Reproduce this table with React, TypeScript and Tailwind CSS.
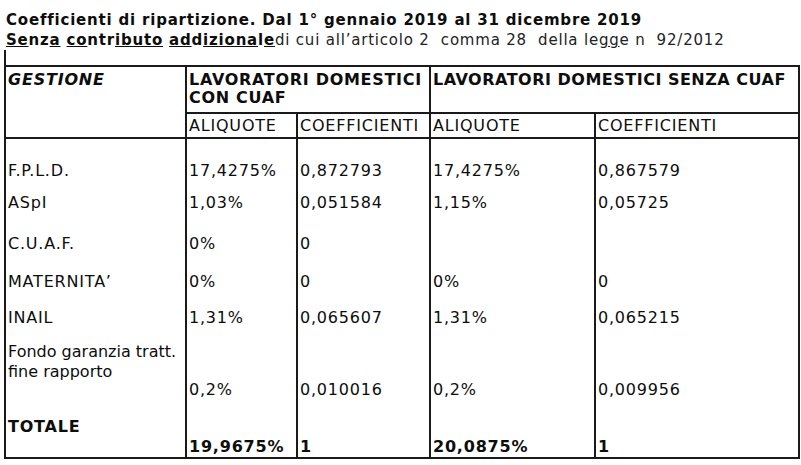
const rows = [
  { label: 'F.P.L.D.', a1: '17,4275%', c1: '0,872793', a2: '17,4275%', c2: '0,867579', h: 'h-[43px]' },
  { label: 'ASpI', a1: '1,03%', c1: '0,051584', a2: '1,15%', c2: '0,05725', h: 'h-[32px]' },
  { label: 'C.U.A.F.', a1: '0%', c1: '0', a2: '', c2: '', h: 'h-[41px]' },
  { label: 'MATERNITA’', a1: '0%', c1: '0', a2: '0%', c2: '0', h: 'h-[38px]' },
  { label: 'INAIL', a1: '1,31%', c1: '0,065607', a2: '1,31%', c2: '0,065215', h: 'h-[36px]' },
]

const cell = 'border-x-2 border-[#1a1a1a] align-bottom px-[2px] leading-[20px]'
const head = 'border-2 border-[#1a1a1a] px-[2px]'

export default function App() {
  return (
    <div
      className="w-[801px] h-[465px] bg-white text-[#0d0d0d] overflow-hidden"
      style={{ fontFamily: '"DejaVu Sans", Verdana, sans-serif' }}
    >
      <div className="pt-[10px] pl-[6px] leading-[20px] text-[15px] tracking-[0.8px]">
        <p className="font-bold">Coefficienti di ripartizione. Dal 1° gennaio 2019 al 31 dicembre 2019</p>
        <p className="whitespace-pre">
          <span className="font-bold">
            <u>Se</u>nz<u>a</u> <u>co</u>ntr<u>ibuto</u> <u>ad</u>d<u>iziona</u>l<u>e</u>
          </span>
          <span className="text-[#222]">di cui all’articolo 2  comma 28  della le<u>gg</u>e n  92/2012</span>
        </p>
      </div>
      <div className="ml-[4px] h-[15px] border-l-2 border-[#1a1a1a]" />
      <table className="ml-[4px] w-[794px] table-fixed border-collapse border-2 border-[#1a1a1a] text-[16px] tracking-[0.8px]">
        <colgroup>
          <col className="w-[181px]" />
          <col className="w-[111px]" />
          <col className="w-[133px]" />
          <col className="w-[165px]" />
          <col className="w-[204px]" />
        </colgroup>
        <thead>
          <tr className="h-[47px]">
            <td rowSpan={2} className={`${head} align-top pt-[4px] font-bold italic leading-[18px]`}>
              GESTIONE
            </td>
            <td colSpan={2} className={`${head} align-top pt-[4px] font-bold leading-[18px] tracking-[0.7px] whitespace-nowrap`}>
              LAVORATORI DOMESTICI
              <br />
              CON CUAF
            </td>
            <td colSpan={2} className={`${head} align-top pt-[4px] font-bold leading-[18px] tracking-[0.5px] whitespace-nowrap`}>
              LAVORATORI DOMESTICI SENZA CUAF
            </td>
          </tr>
          <tr className="h-[25px]">
            <td className={`${head} leading-[20px]`}>ALIQUOTE</td>
            <td className={`${head} leading-[20px]`}>COEFFICIENTI</td>
            <td className={`${head} leading-[20px]`}>ALIQUOTE</td>
            <td className={`${head} leading-[20px]`}>COEFFICIENTI</td>
          </tr>
        </thead>
        <tbody>
          {rows.map(r => (
            <tr key={r.label} className={r.h}>
              <td className={cell}>{r.label}</td>
              <td className={cell}>{r.a1}</td>
              <td className={cell}>{r.c1}</td>
              <td className={cell}>{r.a2}</td>
              <td className={cell}>{r.c2}</td>
            </tr>
          ))}
          <tr className="h-[72px]">
            <td className={`${cell} pb-[18px] leading-[17px] tracking-[0px] whitespace-nowrap`}>
              Fondo garanzia tratt.
              <br />
              fine rapporto
            </td>
            <td className={cell}>0,2%</td>
            <td className={cell}>0,010016</td>
            <td className={cell}>0,2%</td>
            <td className={cell}>0,009956</td>
          </tr>
          <tr className="h-[58px] font-bold">
            <td className={`${cell} pb-[20px]`}>TOTALE</td>
            <td className={cell}>19,9675%</td>
            <td className={cell}>1</td>
            <td className={cell}>20,0875%</td>
            <td className={cell}>1</td>
          </tr>
        </tbody>
      </table>
    </div>
  )
}
